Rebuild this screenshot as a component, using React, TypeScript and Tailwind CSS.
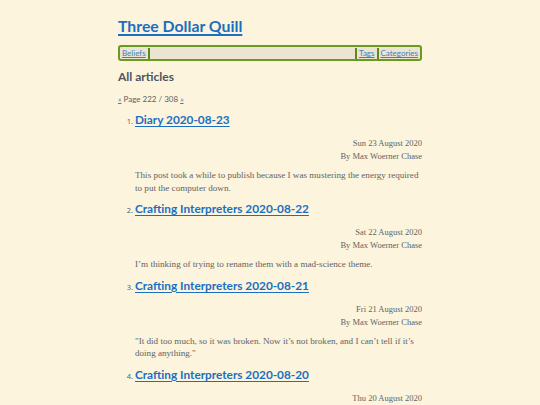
const articles = [
  {
    title: 'Diary 2020-08-23',
    date: 'Sun 23 August 2020',
    excerpt: 'This post took a while to publish because I was mustering the energy required to put the computer down.',
  },
  {
    title: 'Crafting Interpreters 2020-08-22',
    date: 'Sat 22 August 2020',
    excerpt: 'I\u2019m thinking of trying to rename them with a mad-science theme.',
  },
  {
    title: 'Crafting Interpreters 2020-08-21',
    date: 'Fri 21 August 2020',
    excerpt: '"It did too much, so it was broken. Now it\u2019s not broken, and I can\u2019t tell if it\u2019s doing anything."',
  },
  {
    title: 'Crafting Interpreters 2020-08-20',
    date: 'Thu 20 August 2020',
    excerpt: '',
  },
]

const heading = { fontFamily: 'Lato, "Open Sans", sans-serif' }
const body = { fontFamily: '"Liberation Serif", "DejaVu Serif", serif' }

export default function App() {
  return (
    <div className="h-[405px] w-[540px] overflow-hidden bg-[#fcf4dc]">
      <div className="mx-auto w-[304px] pt-[13px]">
        <h1 className="text-[15.8px] font-bold leading-[26px] text-[#1b6fc2]" style={heading}>
          <a href="#" className="underline decoration-[1.5px] underline-offset-2">Three Dollar Quill</a>
        </h1>

        <nav
          className="mt-[6px] flex h-[16px] items-center rounded-[3px] border-2 border-[#6b9a22] bg-[#ebe4d0] px-[2px] text-[8px]"
          style={heading}
        >
          <a href="#" className="text-[#3b7fc8] underline">Beliefs</a>
          <span className="ml-[2px] h-[11px] w-[2px] bg-[#5c8a1a]" />
          <span className="flex-1" />
          <span className="mr-[2px] h-[11px] w-[2px] bg-[#5c8a1a]" />
          <a href="#" className="text-[#3b7fc8] underline">Tags</a>
          <span className="mx-[2px] h-[11px] w-[2px] bg-[#5c8a1a]" />
          <a href="#" className="text-[#3b7fc8] underline">Categories</a>
        </nav>

        <h2 className="mt-[7px] text-[12px] font-bold leading-[18px] text-[#4b5560]" style={heading}>
          All articles
        </h2>

        <p className="mt-[8px] text-[8px] leading-[10px] text-[#59616a]" style={heading}>
          <a href="#" className="text-[#3b7fc8] underline">«</a> Page 222 / 308{' '}
          <a href="#" className="text-[#3b7fc8] underline">»</a>
        </p>

        <ol className="mt-[7px] list-decimal pl-[17px] marker:text-[7.5px] marker:text-[#59616a]">
          {articles.map((a) => (
            <li key={a.title} className="mb-[6px]">
              <h3 className="text-[11.8px] font-bold leading-[18px] text-[#1b6fc2]" style={heading}>
                <a href="#" className="underline decoration-[1px] underline-offset-2">{a.title}</a>
              </h3>
              <div className="mt-[8px] text-right text-[8.5px] leading-[13px] text-[#636363]" style={body}>
                <div>{a.date}</div>
                <div>By Max Woerner Chase</div>
              </div>
              {a.excerpt && (
                <p className="mt-[6px] text-[9.1px] leading-[12.5px] text-[#636363]" style={body}>
                  {a.excerpt}
                </p>
              )}
            </li>
          ))}
        </ol>
      </div>
    </div>
  )
}
